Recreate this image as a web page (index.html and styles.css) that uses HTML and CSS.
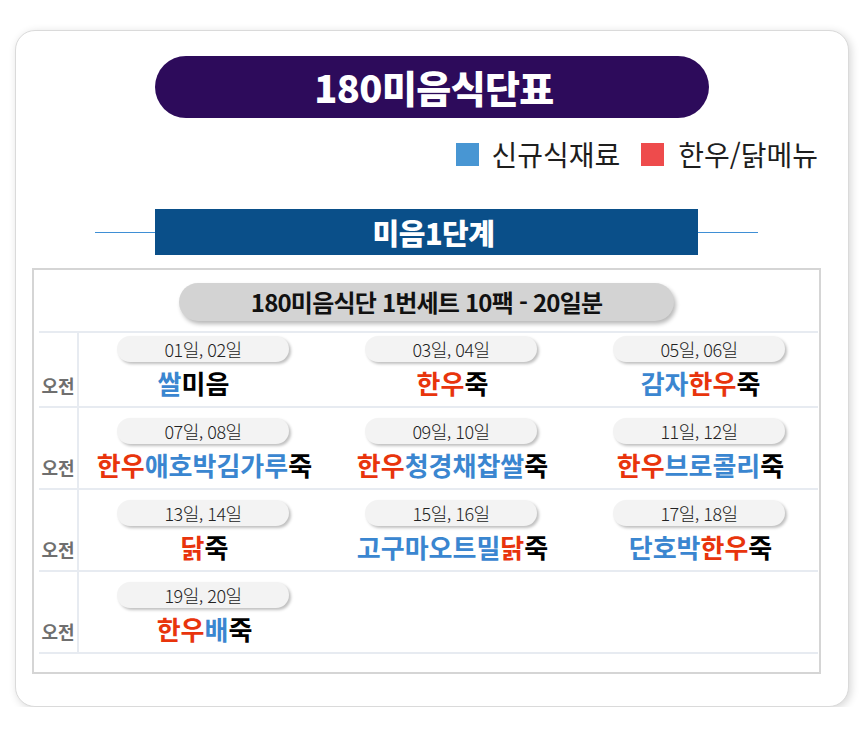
FILE: index.html
```html
<!DOCTYPE html>
<html lang="ko">
<head>
<meta charset="utf-8">
<title>180미음식단표</title>
<link rel="stylesheet" href="styles.css">
</head>
<body>
<div class="card">
  <div class="title">180미음식단표</div>
  <div class="legend">
    <span class="sw sw-blue"></span><span class="lg-text">신규식재료</span>
    <span class="sw sw-red"></span><span class="lg-text">한우/닭메뉴</span>
  </div>
  <div class="stage">
    <div class="section-head">
      <span class="rule"></span>
      <div class="bar">미음1단계</div>
      <span class="rule"></span>
    </div>
    <div class="table">
      <div class="table-head"><div class="set-pill">180미음식단 1번세트 10팩 - 20일분</div></div>
      <div class="rows">
        <div class="row row-first">
          <div class="label">오전</div>
          <div class="cell"><div class="date">01일, 02일</div><div class="menu menu-shift"><span class="b">쌀</span>미음</div></div>
          <div class="cell"><div class="date">03일, 04일</div><div class="menu"><span class="r">한우</span>죽</div></div>
          <div class="cell"><div class="date">05일, 06일</div><div class="menu"><span class="b">감자</span><span class="r">한우</span>죽</div></div>
        </div>
        <div class="row">
          <div class="label">오전</div>
          <div class="cell"><div class="date">07일, 08일</div><div class="menu"><span class="r">한우</span><span class="b">애호박김가루</span>죽</div></div>
          <div class="cell"><div class="date">09일, 10일</div><div class="menu"><span class="r">한우</span><span class="b">청경채찹쌀</span>죽</div></div>
          <div class="cell"><div class="date">11일, 12일</div><div class="menu"><span class="r">한우</span><span class="b">브로콜리</span>죽</div></div>
        </div>
        <div class="row">
          <div class="label">오전</div>
          <div class="cell"><div class="date">13일, 14일</div><div class="menu"><span class="r">닭</span>죽</div></div>
          <div class="cell"><div class="date">15일, 16일</div><div class="menu"><span class="b">고구마오트밀</span><span class="r">닭</span>죽</div></div>
          <div class="cell"><div class="date">17일, 18일</div><div class="menu"><span class="b">단호박</span><span class="r">한우</span>죽</div></div>
        </div>
        <div class="row row-last">
          <div class="label">오전</div>
          <div class="cell"><div class="date">19일, 20일</div><div class="menu"><span class="r">한우</span><span class="b">배</span>죽</div></div>
          <div class="cell"></div>
          <div class="cell"></div>
        </div>
      </div>
    </div>
  </div>
</div>
</body>
</html>
```

FILE: styles.css
```css
html, body {
  margin: 0;
  padding: 0;
  background: #ffffff;
}

body {
  font-family: "Noto Sans CJK KR", "Noto Sans", sans-serif;
  color: #111;
}

.card {
  box-sizing: border-box;
  width: 834px;
  margin: 30px 0 0 15px;
  padding: 25px 0 32px;
  border: 1px solid #dadada;
  border-radius: 20px;
  background: #fff;
  box-shadow: 2px 2px 8px rgba(0, 0, 0, 0.16);
}

.title {
  box-sizing: border-box;
  width: 554px;
  height: 62px;
  margin: 0 auto;
  padding-left: 4px;
  border-radius: 31px;
  background: #2d0b5b;
  color: #fff;
  font-size: 38px;
  font-weight: 900;
  letter-spacing: -0.6px;
  line-height: 62px;
  text-align: center;
}

.legend {
  display: flex;
  align-items: center;
  justify-content: flex-end;
  height: 30px;
  margin-top: 21px;
  padding-right: 30px;
}

.sw {
  width: 23px;
  height: 23px;
  margin-right: 12px;
}

.sw-blue { background: #4896d3; }
.sw-red { background: #ee4b4c; margin-left: 21px; margin-right: 14px; }

.lg-text {
  font-size: 28px;
  line-height: 30px;
  color: #1e1e1e;
}

.stage {
  width: 789px;
  margin: 0 0 0 16px;
}

.section-head {
  display: flex;
  align-items: center;
  justify-content: center;
  margin-top: 40px;
}

.rule {
  width: 60px;
  height: 1px;
  background: #3f8fd5;
}

.bar {
  box-sizing: border-box;
  width: 543px;
  height: 46px;
  padding-left: 14px;
  background: #0a4f89;
  color: #fff;
  font-size: 29px;
  font-weight: 900;
  letter-spacing: -0.5px;
  line-height: 46px;
  text-align: center;
}

.table {
  margin-top: 13px;
  border: 2px solid #d5d5d5;
  padding-bottom: 18px;
}

.table-head {
  padding: 13px 0 10px;
}

.set-pill {
  width: 495px;
  height: 38px;
  margin: 0 auto;
  border-radius: 19px;
  background: #d3d3d3;
  box-shadow: 2px 3px 4px rgba(0, 0, 0, 0.28);
  color: #111;
  font-size: 24px;
  font-weight: 700;
  letter-spacing: -0.8px;
  line-height: 38px;
  text-align: center;
}

.rows {
  width: 779px;
  margin-left: 5px;
}

.row {
  display: grid;
  grid-template-columns: 40px 248px 248px 248px;
  border-top: 2px solid #e7ebf1;
}

.row-last {
  border-bottom: 2px solid #e7ebf1;
}

.label {
  display: flex;
  align-items: flex-end;
  justify-content: center;
  padding-bottom: 11px;
  border-right: 2px solid #e7ebf1;
  color: #6f6f6f;
  font-size: 18px;
  font-weight: 700;
  line-height: 20px;
}

.cell {
  display: flex;
  flex-direction: column;
  align-items: center;
  padding: 10px 0 8px 3px;
}

.row-first .cell {
  padding-top: 3px;
}

.date {
  box-sizing: border-box;
  width: 172px;
  height: 26px;
  margin-left: -3px;
  border-radius: 13px;
  background: #f3f3f3;
  box-shadow: 2px 2px 3px rgba(0, 0, 0, 0.25);
  color: #222;
  font-size: 18px;
  font-weight: 300;
  letter-spacing: -0.5px;
  line-height: 26px;
  text-align: center;
}

.menu {
  margin-top: 6px;
  font-size: 26px;
  font-weight: 700;
  letter-spacing: 0;
  line-height: 30px;
  color: #000;
  white-space: nowrap;
}

.menu-shift {
  padding-right: 22px;
}

.r { color: #e8340c; }
.b { color: #3a86d0; }
```
